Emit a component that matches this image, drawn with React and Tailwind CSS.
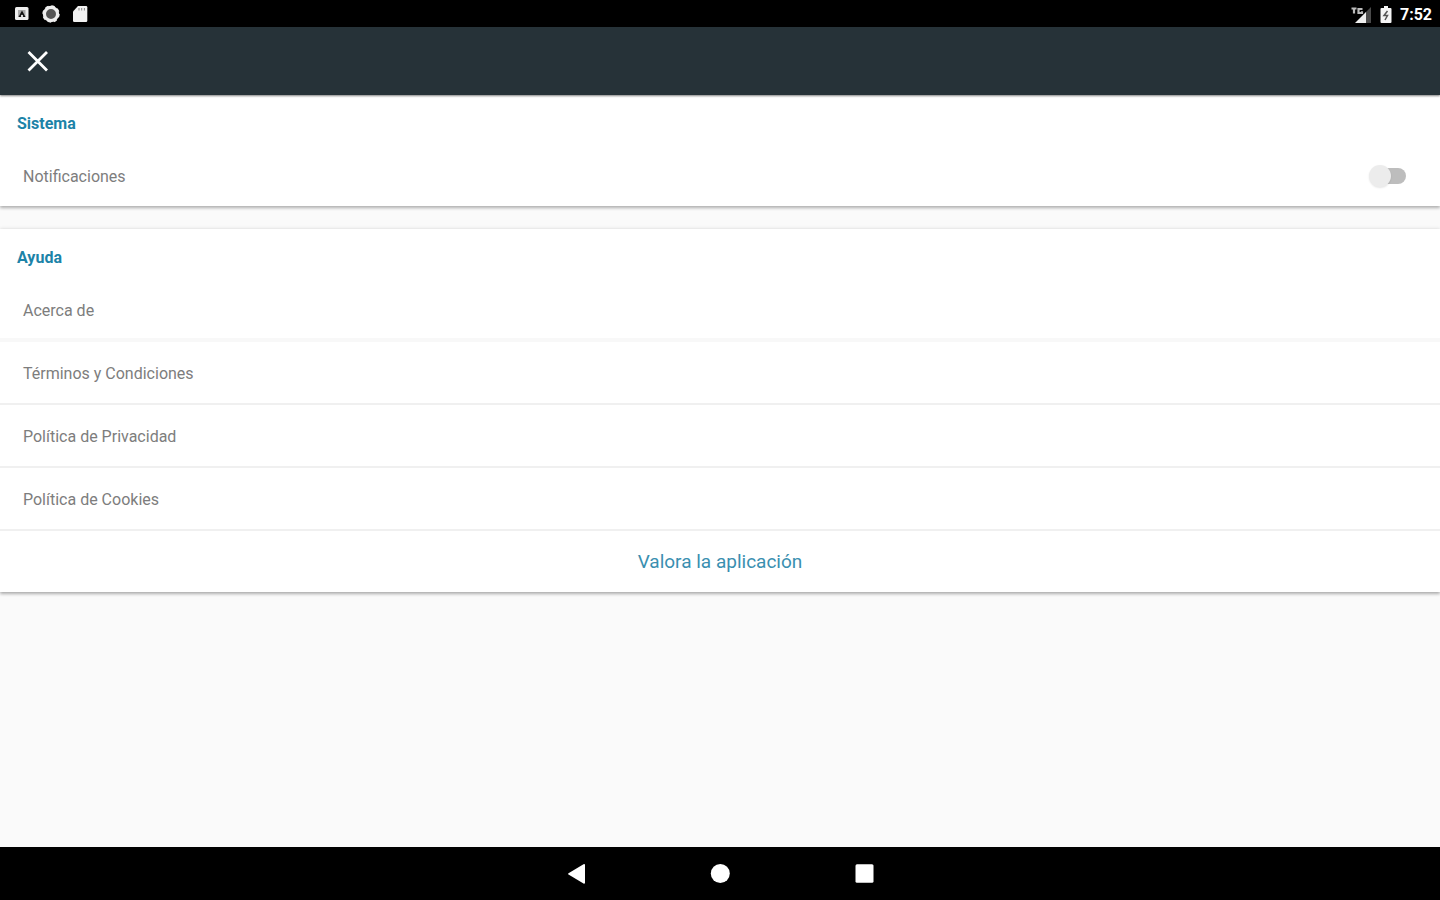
import { useState } from "react";

const helpLinks = [
  { label: "Términos y Condiciones", href: "#terminos" },
  { label: "Política de Privacidad", href: "#privacidad" },
  { label: "Política de Cookies", href: "#cookies" },
];

function StatusBar() {
  return (
    <div className="flex h-[27px] items-center justify-between bg-black pl-[14px] pr-2 text-white">
      <div className="flex items-center gap-3 pt-px">
        <svg className="h-4 w-4" viewBox="0 0 16 16" aria-hidden="true">
          <rect x="1" y="1" width="13.5" height="13" rx="1.5" fill="#eee" />
          <path d="M4 4h7.500v7H4z" fill="#aaa" />
          <path d="M4.500 11 8 4.500l3.500 6.500z" fill="#111" />
          <circle cx="8" cy="10" r="1.200" fill="#ddd" />
        </svg>
        <svg className="h-[18px] w-[18px]" viewBox="0 0 18 18" aria-hidden="true">
          <circle cx="9" cy="9" r="6.6" fill="#555" stroke="#eee" strokeWidth="3.2" />
          <circle cx="9" cy="9" r="8" fill="none" stroke="#eee" strokeWidth="1.4" strokeDasharray="3.4 2.9" />
        </svg>
        <svg className="h-[18px] w-4" viewBox="0 0 16 18" aria-hidden="true">
          <path d="M6 1h8a1.3 1.3 0 0 1 1.3 1.3v13.4A1.3 1.3 0 0 1 14 17H2.300A1.300 1.300 0 0 1 1 15.700V6.500z" fill="#f2f2f2" />
          <path d="M7 3v2.500M9.700 3v2.500M12.400 3v2.500" stroke="#888" strokeWidth="1" />
        </svg>
      </div>
      <div className="flex items-center gap-2 pt-0.5">
        <svg className="h-[18px] w-[22px]" viewBox="0 0 22 18" aria-hidden="true">
          <path d="M21 1v16H15V7z" fill="#4a4a4a" />
          <path d="M16 6v11H5z" fill="#eee" />
          <path d="M1.500 2.500h5M4 2.500v5M12.500 3H8.500v4H12V5.200" fill="none" stroke="#bbb" strokeWidth="2.200" />
        </svg>
        <svg className="h-[18px] w-3" viewBox="0 0 12 18" aria-hidden="true">
          <path d="M4 0h4v2h2.500q1 0 1 1v13q0 1-1 1h-9q-1 0-1-1V3q0-1 1-1H4z" fill="#f5f5f5" />
          <path d="M7.500 5 4 9.500h3.500L5 14" fill="none" stroke="#555" strokeWidth="1.500" />
        </svg>
        <time className="text-base font-bold leading-6">7:52</time>
      </div>
    </div>
  );
}

function SectionTitle({ children }) {
  return <h2 className="px-[17px] pb-2.5 pt-[17px] text-base font-bold leading-6 text-[#1c83a8]">{children}</h2>;
}

export default function App() {
  const [notifications, setNotifications] = useState(false);

  return (
    <div className="flex min-h-screen flex-col bg-[#fafafa] font-[Roboto,sans-serif] text-base leading-6 text-[#7d7d7d]">
      <StatusBar />
      <header className="relative flex bg-[#263238] px-[22px] py-[18px] shadow-[0_1px_2px_rgba(0,0,0,0.5)]">
        <button type="button" aria-label="Cerrar" className="flex h-8 w-8 items-center justify-center">
          <svg className="h-8 w-8" viewBox="0 0 32 32" aria-hidden="true">
            <path d="M6.500 7 25 25.500M25 7 6.500 25.500" stroke="#fff" strokeWidth="2.800" />
          </svg>
        </button>
      </header>

      <main className="flex grow flex-col gap-[23px]">
        <section className="bg-white shadow-[0_2px_3px_rgba(0,0,0,0.3)]">
          <SectionTitle>Sistema</SectionTitle>
          <label className="flex cursor-pointer items-start justify-between pb-[17px] pl-[23px] pr-[34px] pt-[19px]">
            <span>Notificaciones</span>
            <span className="relative flex h-[22px] w-[37px] items-center">
              <input
                type="checkbox"
                role="switch"
                checked={notifications}
                onChange={(e) => setNotifications(e.target.checked)}
                className="peer ml-1 h-4 w-full cursor-pointer appearance-none rounded-full bg-[#bdbdbd] checked:bg-[#8fc1d4]"
              />
              <span className="pointer-events-none absolute left-0 h-[22px] w-[22px] rounded-full bg-[#ececec] shadow-[0_1px_2px_rgba(0,0,0,0.1)] peer-checked:left-[15px] peer-checked:bg-[#1c83a8]" />
            </span>
          </label>
        </section>

        <section className="bg-white shadow-[0_-1px_3px_rgba(0,0,0,0.08),0_2px_3px_rgba(0,0,0,0.3)]">
          <SectionTitle>Ayuda</SectionTitle>
          <a href="#acerca" className="block border-b-4 border-[#f8f8f8] px-[23px] pb-[15px] pt-[19px]">
            Acerca de
          </a>
          {helpLinks.map((link) => (
            <a key={link.href} href={link.href} className="block border-b-2 border-[#f0f0f0] px-[23px] pb-[17px] pt-5">
              {link.label}
            </a>
          ))}
          <button type="button" className="block w-full pb-[18px] pt-[19px] text-center text-[19px] leading-6 text-[#3a8fb0]">
            Valora la aplicación
          </button>
        </section>
      </main>

      <nav aria-label="Sistema" className="flex items-center justify-center gap-[120px] bg-black pb-[14px] pt-[15px]">
        <button type="button" aria-label="Atrás" className="h-6 w-6">
          <svg viewBox="0 0 24 24" aria-hidden="true">
            <path d="M21 2.500v18.500q-.5 1-1.500.4L4.500 12.600q-1-.7 0-1.400L19.500 2.200q1-.5 1.500.3z" fill="#fff" />
          </svg>
        </button>
        <button type="button" aria-label="Inicio" className="h-6 w-6">
          <svg viewBox="0 0 24 24" aria-hidden="true">
            <circle cx="12.300" cy="11.500" r="9.500" fill="#fff" />
          </svg>
        </button>
        <button type="button" aria-label="Recientes" className="h-6 w-6">
          <svg viewBox="0 0 24 24" aria-hidden="true">
            <rect x="3.500" y="2.300" width="18" height="18.500" rx="1.500" fill="#fff" />
          </svg>
        </button>
      </nav>
    </div>
  );
}
